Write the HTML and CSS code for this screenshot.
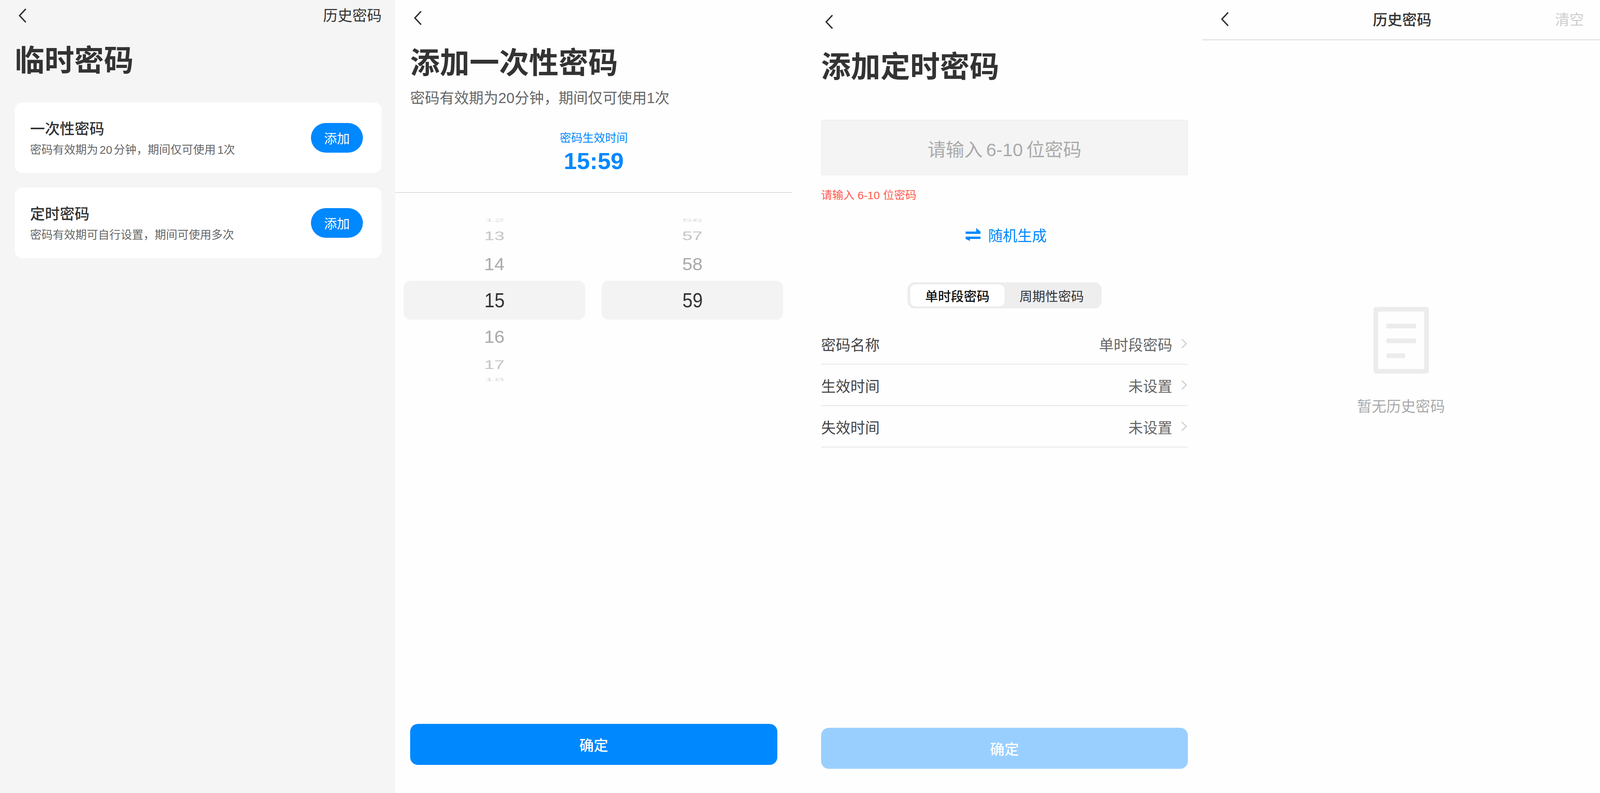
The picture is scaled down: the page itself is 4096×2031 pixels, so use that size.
FILE: index.html
```html
<!DOCTYPE html>
<html lang="zh-CN">
<head>
<meta charset="utf-8">
<title>临时密码</title>
<link rel="stylesheet" href="styles.css">
</head>
<body>
<div class="screens">

  <section class="panel panel-home">
    <div class="nav nav-home">
      <svg class="back" viewBox="0 0 22 36"><path d="M19 2 L4 18 L19 34"/></svg>
      <span class="nav-link">历史密码</span>
    </div>
    <h1 class="title title-home">临时密码</h1>
    <div class="card">
      <div class="card-text">
        <div class="card-title">一次性密码</div>
        <div class="card-sub">密码有效期为 20 分钟，期间仅可使用 1次</div>
      </div>
      <span class="add-btn">添加</span>
    </div>
    <div class="card">
      <div class="card-text">
        <div class="card-title">定时密码</div>
        <div class="card-sub">密码有效期可自行设置，期间可使用多次</div>
      </div>
      <span class="add-btn">添加</span>
    </div>
  </section>

  <section class="panel panel-once">
    <div class="once-head">
      <div class="nav nav-once">
        <svg class="back" viewBox="0 0 22 36"><path d="M19 2 L4 18 L19 34"/></svg>
      </div>
      <h1 class="title title-once">添加一次性密码</h1>
      <p class="once-sub">密码有效期为20分钟，期间仅可使用1次</p>
      <div class="time-label">密码生效时间</div>
      <div class="time-value">15:59</div>
    </div>
    <div class="picker">
      <div class="wheel">
        <div class="w w3">12</div>
        <div class="w w2">13</div>
        <div class="w w1">14</div>
        <div class="w w0"><span>15</span></div>
        <div class="w w1b">16</div>
        <div class="w w2b">17</div>
        <div class="w w3b">18</div>
      </div>
      <div class="wheel">
        <div class="w w3">56</div>
        <div class="w w2">57</div>
        <div class="w w1">58</div>
        <div class="w w0"><span>59</span></div>
      </div>
    </div>
    <div class="confirm">确定</div>
  </section>

  <section class="panel panel-timed">
    <div class="nav nav-timed">
      <svg class="back" viewBox="0 0 22 36"><path d="M19 2 L4 18 L19 34"/></svg>
    </div>
    <h1 class="title title-timed">添加定时密码</h1>
    <div class="pw-input">请输入 6-10 位密码</div>
    <div class="pw-error">请输入 6-10 位密码</div>
    <div class="random">
      <svg class="swap" viewBox="0 0 38 33"><path d="M0 9 H27 V0 L38 9 V15 H0 Z M38 22 V28 H11 V33 L0 28 V22 Z"/></svg>
      <span>随机生成</span>
    </div>
    <div class="segment">
      <span class="seg seg-on">单时段密码</span>
      <span class="seg">周期性密码</span>
    </div>
    <div class="rows">
      <div class="row"><span>密码名称</span><span class="val">单时段密码</span><svg class="more" viewBox="0 0 15 24"><path d="M2 1.5 L13 12 L2 22.5"/></svg></div>
      <div class="row"><span>生效时间</span><span class="val">未设置</span><svg class="more" viewBox="0 0 15 24"><path d="M2 1.5 L13 12 L2 22.5"/></svg></div>
      <div class="row"><span>失效时间</span><span class="val">未设置</span><svg class="more" viewBox="0 0 15 24"><path d="M2 1.5 L13 12 L2 22.5"/></svg></div>
    </div>
    <div class="confirm confirm-off">确定</div>
  </section>

  <section class="panel panel-history">
    <div class="nav nav-history">
      <svg class="back" viewBox="0 0 22 36"><path d="M19 2 L4 18 L19 34"/></svg>
      <span class="nav-title">历史密码</span>
      <span class="nav-clear">清空</span>
    </div>
    <div class="empty">
      <svg class="doc" viewBox="0 0 142 171">
        <rect class="doc-frame" x="6" y="6" width="130" height="159" rx="1"/>
        <rect class="doc-bar" x="33" y="43" width="76" height="12" rx="3"/>
        <rect class="doc-bar" x="33" y="81" width="76" height="12" rx="3"/>
        <rect class="doc-bar" x="33" y="119" width="48" height="12" rx="3"/>
      </svg>
      <div class="empty-text">暂无历史密码</div>
    </div>
  </section>

</div>
</body>
</html>
```
FILE: styles.css
```css
* { box-sizing: border-box; }
html, body { margin: 0; padding: 0; }
body {
  width: 4096px;
  height: 2031px;
  overflow: hidden;
  background: #fefefe;
  color: #333;
  font-family: "Liberation Sans", "Noto Sans CJK SC", sans-serif;
}
.screens { display: flex; width: 4096px; height: 2031px; }
.panel { display: flex; flex-direction: column; height: 100%; background: #fefefe; }
.panel-home { width: 1012px; background: #f5f5f5; padding: 0 35px 0 38px; }
.panel-once { width: 1015px; }
.panel-timed { width: 1050px; padding: 0 36px 62px 75px; }
.panel-history { width: 1019px; }

.nav { display: flex; align-items: center; flex: none; }
.back { width: 22px; height: 36px; flex: none; }
.back path { fill: none; stroke: #333; stroke-width: 3.6; stroke-linecap: round; stroke-linejoin: round; }

.title { margin: 0; font-weight: 700; line-height: 90px; font-size: 76px; color: #333; }

/* home */
.nav-home { height: 80px; justify-content: space-between; padding-left: 8px; }
.nav-link { font-size: 37.5px; line-height: 46px; color: #333; }
.title-home { margin-top: 31px; margin-bottom: 61px; }
.card {
  display: flex; align-items: center; justify-content: space-between;
  height: 181px; margin-bottom: 37px; padding: 0 48px 0 39px;
  background: #fff; border-radius: 20px;
}
.card-text { padding-top: 5px; }
.card-title { font-size: 38px; line-height: 46px; font-weight: 500; color: #333; }
.card-sub { margin-top: 11px; font-size: 29px; line-height: 40px; color: #666; word-spacing: -4px; }
.add-btn {
  display: flex; align-items: center; justify-content: center;
  width: 133px; height: 76px; border-radius: 38px;
  background: #0088ff; color: #fff; font-size: 33px;
}

/* one-time */
.once-head { padding: 0 37px 49px 38px; border-bottom: 2px solid #ddd; display: flex; flex-direction: column; }
.nav-once { height: 92px; padding-left: 8px; }
.title-once { margin-top: 25px; }
.once-sub { margin: 21px 0 0; font-size: 37.6px; line-height: 46px; color: #666; }
.time-label { margin-top: 62px; text-align: center; font-size: 29px; line-height: 36px; color: #0088ff; }
.time-value { margin-top: 11px; text-align: center; font-size: 60px; line-height: 60px; font-weight: 700; color: #0088ff; }

.picker { display: grid; grid-template-columns: 465px 465px; column-gap: 42px; padding: 60px 0 0 21px; }
.wheel { display: flex; flex-direction: column; align-items: stretch; }
.w { display: flex; align-items: center; justify-content: center; font-size: 52px; line-height: 1; }
.w3, .w3b { color: #ddd; }
.w2, .w2b { color: #c4c4c4; }
.w1, .w1b { color: #aaa; }
.w3 { height: 20px; transform: scale(.9, .22); }
.w2 { height: 59px; transform: scale(.9, .62); }
.w1 { height: 86px; transform: scale(.9, .865); }
.w0 { height: 100px; background: #f3f3f3; border-radius: 18px; color: #333; }
.w0 span { display: inline-block; transform: scaleX(.9); }
.w1b { height: 85px; transform: scale(.9, .865); }
.w2b { height: 60px; transform: scale(.9, .62); }
.w3b { height: 16px; transform: scale(.9, .22); }

.confirm {
  display: flex; align-items: center; justify-content: center;
  height: 105px; border-radius: 20px; margin: auto 37px 72px 38px;
  background: #0088ff; color: #fff; font-size: 37px; font-weight: 500;
}
.confirm-off { margin: auto 0 0; background: #99cfff; }

/* timed */
.nav-timed { height: 112px; padding-left: 9px; }
.title-timed { margin-top: 15px; }
.pw-input {
  display: flex; align-items: center; justify-content: center;
  height: 142px; margin-top: 90px; padding-top: 3px;
  background: #f4f4f4; border: 2px solid #eee; border-radius: 4px;
  font-size: 47px; word-spacing: -4px; color: #aaa;
}
.pw-error { margin-top: 32px; padding-top: 1px; height: 36px; font-size: 28.5px; line-height: 36px; color: #ff5a50; }
.random {
  display: flex; align-items: center; justify-content: center; gap: 20px;
  height: 46px; margin-top: 60px; padding-left: 8px;
  font-size: 37.5px; color: #0088ff;
}
.swap { width: 38px; height: 33px; fill: #0088ff; }
.segment {
  display: flex; align-self: center; width: 497px; height: 67px;
  margin-top: 100px; padding: 5px 7px;
  background: #eeeeef; border-radius: 18px;
}
.seg {
  flex: 1; display: flex; align-items: center; justify-content: center;
  font-size: 33px; color: #333; padding-top: 1px;
}
.seg-on { background: #fff; border-radius: 14px; color: #111; font-weight: 500; box-shadow: 0 0 4px rgba(0,0,0,.06); }
.rows { margin-top: 38px; }
.row {
  display: flex; align-items: center; height: 106px;
  border-bottom: 2px solid #e6e6e6;
  font-size: 37.5px; color: #444;
}
.val { margin-left: auto; color: #666; }
.more { width: 15px; height: 24px; margin-left: 23px; margin-right: 2px; }
.more path { fill: none; stroke: #ccc; stroke-width: 2.6; stroke-linecap: round; stroke-linejoin: round; }

/* history */
.nav-history {
  display: grid; grid-template-columns: 1fr auto 1fr;
  height: 103px; padding: 0 41px 3px 47px;
  border-bottom: 2px solid #d8d8d8;
}
.nav-title { font-size: 37.5px; font-weight: 500; color: #333; margin-bottom: 3px; }
.nav-clear { font-size: 37px; color: #ccc; justify-self: end; margin-bottom: 3px; }
.empty { display: flex; flex-direction: column; align-items: center; margin-top: 683px; }
.doc { width: 142px; height: 171px; }
.doc-frame { fill: none; stroke: #ececec; stroke-width: 12; }
.doc-bar { fill: #ececec; }
.empty-text { margin-top: 61px; font-size: 37.5px; line-height: 46px; color: #aaa; }
```
